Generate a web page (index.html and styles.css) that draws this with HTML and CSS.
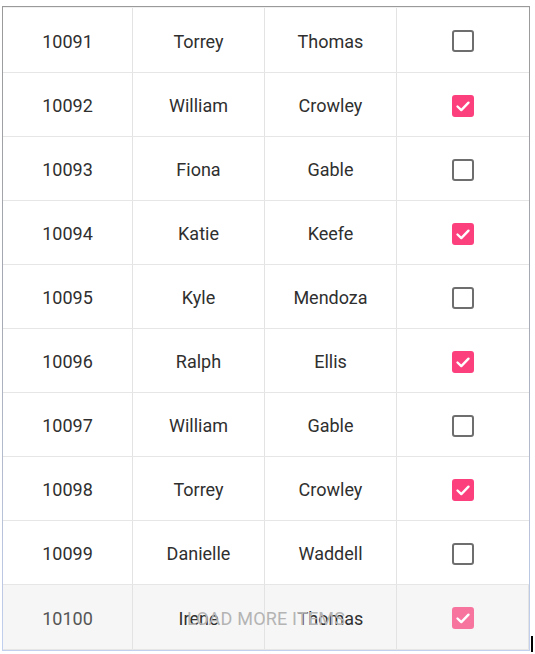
FILE: index.html
```html
<!DOCTYPE html>
<html>
<head>
<meta charset="utf-8">
<link rel="stylesheet" href="styles.css">
</head>
<body>
<div class="grid">
  <div class="row"><div class="cell">10091</div><div class="cell">Torrey</div><div class="cell">Thomas</div><div class="cell"><span class="cb"></span></div></div>
  <div class="row"><div class="cell">10092</div><div class="cell">William</div><div class="cell">Crowley</div><div class="cell"><span class="cb on"><svg viewBox="0 0 22 22"><path d="M5.5 11.5l3.8 3.6 7.2-7.4" /></svg></span></div></div>
  <div class="row"><div class="cell">10093</div><div class="cell">Fiona</div><div class="cell">Gable</div><div class="cell"><span class="cb"></span></div></div>
  <div class="row"><div class="cell">10094</div><div class="cell">Katie</div><div class="cell">Keefe</div><div class="cell"><span class="cb on"><svg viewBox="0 0 22 22"><path d="M5.5 11.5l3.8 3.6 7.2-7.4" /></svg></span></div></div>
  <div class="row"><div class="cell">10095</div><div class="cell">Kyle</div><div class="cell">Mendoza</div><div class="cell"><span class="cb"></span></div></div>
  <div class="row"><div class="cell">10096</div><div class="cell">Ralph</div><div class="cell">Ellis</div><div class="cell"><span class="cb on"><svg viewBox="0 0 22 22"><path d="M5.5 11.5l3.8 3.6 7.2-7.4" /></svg></span></div></div>
  <div class="row"><div class="cell">10097</div><div class="cell">William</div><div class="cell">Gable</div><div class="cell"><span class="cb"></span></div></div>
  <div class="row"><div class="cell">10098</div><div class="cell">Torrey</div><div class="cell">Crowley</div><div class="cell"><span class="cb on"><svg viewBox="0 0 22 22"><path d="M5.5 11.5l3.8 3.6 7.2-7.4" /></svg></span></div></div>
  <div class="row"><div class="cell">10099</div><div class="cell">Danielle</div><div class="cell">Waddell</div><div class="cell"><span class="cb"></span></div></div>
  <div class="row last"><div class="cell dim">10100</div><div class="cell">Irene</div><div class="cell">Thomas</div><div class="cell"><span class="cb on faded"><svg viewBox="0 0 22 22"><path d="M5.5 11.5l3.8 3.6 7.2-7.4" /></svg></span></div>
    <div class="loadmore">LOAD MORE ITEMS</div>
  </div>
</div>
<div class="caret"></div>
</body>
</html>
```
FILE: styles.css
```css
html, body {
  margin: 0;
  padding: 0;
  background: #ffffff;
}
body {
  font-family: Roboto, "Liberation Sans", sans-serif;
  position: relative;
  width: 535px;
  height: 654px;
  overflow: hidden;
}
.grid {
  margin: 6px 0 0 2px;
  width: 526px;
  border: 1px solid #9e9e9e;
  border-image: linear-gradient(to bottom, #9a9a9a 0%, #a8acb6 50%, #c2d0f0 100%) 1;
}
.row {
  display: grid;
  grid-template-columns: 130px 132px 132px 132px;
  height: 64px;
  border-bottom: 1px solid #e6e6e6;
  box-sizing: border-box;
  position: relative;
}
.row:first-child {
  height: 66px;
  border-top: 1px solid #f0f0f0;
}
.cell {
  display: flex;
  align-items: center;
  justify-content: center;
  padding-top: 2px;
  font-size: 18px;
  color: #2f2f2f;
  border-right: 1px solid #e3e3e3;
}
.cell:last-child {
  border-right: none;
}
.row.last {
  background: #f6f6f6;
  height: 65px;
}
.cell.dim {
  color: #555555;
}
.cb {
  display: block;
  width: 18px;
  height: 18px;
  border: 2px solid #6e6e6e;
  border-radius: 3px;
}
.cb.on {
  background: #fc3f7d;
  border-color: #fc3f7d;
  position: relative;
}
.cb svg {
  position: absolute;
  left: -2px;
  top: -2px;
  width: 22px;
  height: 22px;
}
.cb svg path {
  fill: none;
  stroke: #ffffff;
  stroke-width: 2.4;
  stroke-linecap: round;
  stroke-linejoin: round;
}
.cb.faded {
  background: #f7749f;
  border-color: #f7749f;
}
.loadmore {
  position: absolute;
  left: 0;
  right: 0;
  top: 0;
  bottom: 0;
  display: flex;
  align-items: center;
  justify-content: center;
  padding-top: 2px;
  font-size: 18px;
  color: #b4b4b4;
  letter-spacing: 0.2px;
  pointer-events: none;
}
.caret {
  position: absolute;
  left: 531px;
  top: 636px;
  width: 2px;
  height: 16px;
  background: #000000;
}
```
